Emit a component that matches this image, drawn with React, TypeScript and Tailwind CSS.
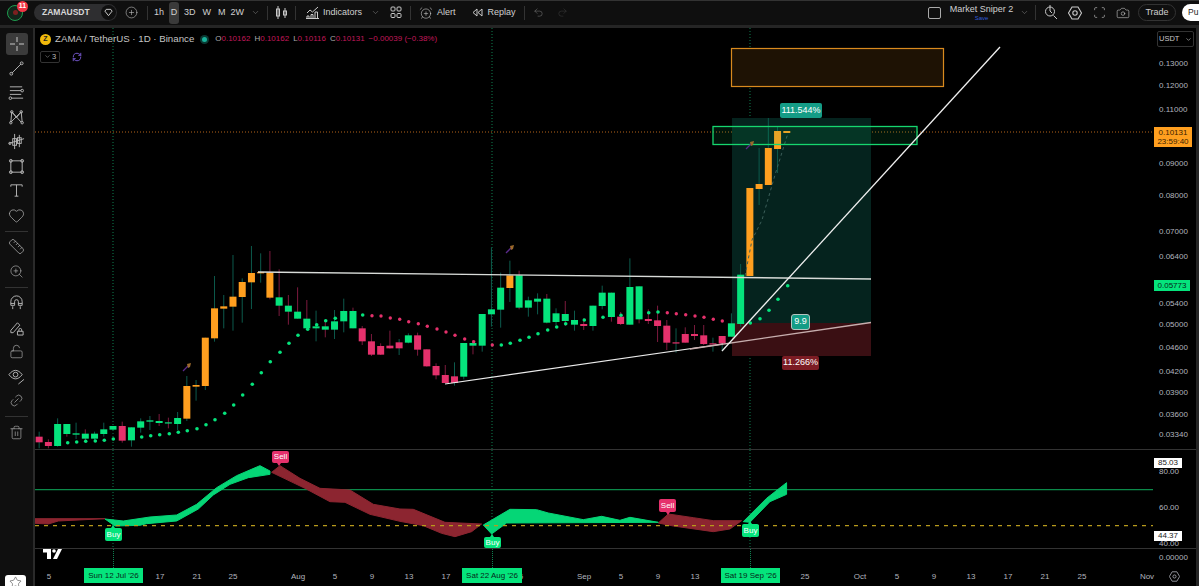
import { ChevronDown, CirclePlus, Undo2, Redo2, Camera, Scan, Heart, Ruler, ZoomIn, LockOpen, Link2, Trash2, AlarmClockPlus, Star, RefreshCw } from "lucide-react";

const GREEN = "#05e47c";
const RED = "#e5316c";
const ORANGE = "#ff9f1f";
const WICK_TEAL = "#0c5a4c";
const WICK_RED = "#7c1a3e";

// kind, bodyTop, bodyBottom, wickTop, wickBottom, in 3x units from y=240
// G = green with red wick, R = red with teal wick, O = orange with red wick
const candles: [string, number, number, number, number][] = [
  ["R", 590, 607, 575, 625], ["r", 606, 618, 598, 625], ["g", 552, 618, 535, 620], ["G", 552, 582, 552, 590],
  ["g", 580, 584, 548, 597], ["G", 581, 596, 568, 604], ["g", 581, 596, 575, 605], ["g", 568, 582, 548, 590],
  ["g", 558, 569, 558, 570], ["r", 558, 602, 545, 608], ["g", 562, 601, 562, 620], ["g", 544, 563, 535, 578],
  ["g", 541, 545, 528, 570], ["G", 543, 549, 522, 558], ["G", 547, 550, 533, 565], ["g", 534, 552, 516, 570],
  ["o", 438, 536, 408, 543], ["o", 435, 440, 420, 482], ["o", 293, 438, 293, 450], ["o", 205, 295, 108, 305],
  ["o", 199, 206, 165, 265], ["o", 170, 200, 45, 272], ["o", 126, 171, 115, 248], ["o", 99, 127, 18, 207],
  ["o", 96, 100, 40, 128], ["O", 97, 173, 33, 178], ["G", 172, 197, 88, 228], ["G", 197, 215, 165, 254],
  ["G", 215, 236, 142, 236], ["G", 236, 265, 180, 270], ["g", 259, 265, 212, 304], ["G", 259, 269, 240, 292],
  ["g", 244, 269, 210, 297], ["g", 213, 244, 176, 277], ["G", 213, 265, 203, 265], ["r", 265, 304, 258, 315],
  ["r", 304, 344, 282, 348], ["r", 318, 344, 310, 345], ["r", 317, 325, 272, 326], ["R", 307, 325, 297, 345],
  ["g", 286, 308, 280, 310], ["r", 286, 329, 278, 347], ["r", 328, 379, 328, 380], ["r", 378, 406, 370, 418],
  ["r", 405, 429, 375, 430], ["R", 409, 429, 367, 437], ["g", 309, 410, 309, 418], ["G", 309, 317, 300, 343],
  ["g", 222, 317, 222, 335], ["g", 208, 223, 22, 260], ["g", 143, 209, 98, 263], ["o", 106, 144, 62, 186],
  ["G", 106, 203, 92, 208], ["g", 181, 203, 170, 230], ["g", 176, 185, 160, 223], ["G", 176, 248, 162, 250],
  ["g", 220, 246, 205, 256], ["G", 222, 243, 183, 258], ["g", 240, 254, 212, 272], ["r", 252, 258, 235, 270],
  ["g", 197, 258, 197, 272], ["g", 158, 198, 137, 208], ["G", 158, 231, 158, 245], ["r", 230, 252, 216, 255],
  ["g", 141, 254, 55, 254], ["G", 139, 238, 139, 250], ["r", 237, 243, 208, 252], ["r", 241, 258, 197, 306],
  ["r", 257, 308, 240, 330], ["R", 307, 309, 265, 338], ["r", 282, 308, 262, 308], ["r", 282, 288, 255, 300],
  ["r", 286, 312, 255, 315], ["R", 310, 312, 293, 335], ["R", 288, 311, 288, 332], ["g", 250, 290, 220, 290],
  ["g", 104, 252, 72, 260], ["o", -156, 108, -156, 108], ["o", -168, -153, -276, -105], ["o", -276, -165, -366, -165],
  ["o", -327, -273, -339, -201], ["o", -327, -321, -327, -321],
];

// parabolic dots, page coordinates
const greenDots: [number, number][] = [
  [67.7, 442.7], [76.7, 442], [85.7, 441.3], [95.3, 441], [104.3, 440.3], [113.3, 439], [141.7, 437], [150.7, 435.7],
  [159.7, 434.7], [169.3, 433.7], [178.3, 432.3], [187.3, 430.7], [197, 428.7], [206, 424.7], [215, 419.7], [224.7, 413.3],
  [233.7, 405], [242.7, 395], [252.3, 384.3], [261.3, 372.7], [270.3, 361.7], [280, 352.3], [289, 343.3], [298, 335.3],
  [307.7, 329.3], [316.7, 324.7], [325.7, 320.7], [335.3, 318.3], [362.7, 315], [501.3, 345], [510.3, 343.3], [520, 340.3],
  [529, 337.3], [538, 333.7], [547.7, 330], [556.7, 327], [565.7, 323.7], [584.3, 320], [603, 317.3], [621, 315.3],
  [648.7, 312.7], [658, 312], [750.3, 323], [760, 318.7], [769, 310.3], [778, 299.3], [787.7, 285.7],
];
const redDots: [number, number][] = [
  [372, 315.7], [381, 316], [390.3, 318], [399.7, 319.3], [408.7, 321.7], [418.3, 323.7], [427.3, 326.3], [437, 329],
  [446, 332], [455, 335.3], [464.7, 339], [473.7, 341.7], [492.3, 345], [667.3, 312.7], [676.3, 313.7], [685.7, 314.7],
  [695, 316], [704, 317.3], [713.3, 319.3], [722.3, 321],
];

const priceTicks = [
  ["0.13000", 64], ["0.12000", 86], ["0.11000", 110], ["0.09000", 164], ["0.08000", 196], ["0.07000", 232], ["0.06400", 257],
  ["0.05400", 304], ["0.05000", 324.5], ["0.04600", 348], ["0.04200", 372], ["0.03900", 393], ["0.03600", 414.5], ["0.03340", 434.5],
] as const;

const timeTicks = [
  ["5", 49], ["17", 160], ["21", 197], ["25", 233], ["Aug", 298], ["5", 335], ["9", 372], ["13", 409], ["17", 446], ["6", 521],
  ["Sep", 584], ["5", 621], ["9", 658], ["13", 695], ["25", 805], ["Oct", 860], ["5", 897], ["9", 934], ["13", 971], ["17", 1008],
  ["21", 1045], ["25", 1082],
] as const;

function Wand({ x, y }: { x: number; y: number }) {
  return (
    <g transform={`translate(${x} ${y})`}>
      <path d="M-4 4 L1 -1" stroke="#5b2a8c" strokeWidth="1.3" />
      <path d="M0 -3 L4 -4 L3 0 L1 1 Z" fill="#9c6a2c" />
    </g>
  );
}

function PriceChart() {
  return (
    <svg viewBox="35 28 1118 421" className="block w-full h-full">
      <line x1="35" y1="132" x2="1153" y2="132" stroke="#b5651a" strokeDasharray="1 2" />
      {[113, 492, 750].map((x) => (
        <line key={x} x1={x} y1="28" x2={x} y2="449" stroke="#0e8050" strokeDasharray="1 2" />
      ))}
      <rect x="732" y="118" width="139" height="205" fill="#05231e" />
      <rect x="732" y="323" width="139" height="33" fill="#3a0f13" />
      <rect x="731.5" y="48.5" width="212" height="38" fill="#1e1204" stroke="#d98a1e" strokeWidth="1.2" />
      {candles.map(([kind, top, bottom, wickTop, wickBottom], i) => {
        const x = 113 + (i - 8) * 9.23;
        const k = kind.toLowerCase();
        const fill = k === "g" ? GREEN : k === "r" ? RED : ORANGE;
        const wick = kind === "G" || kind === "O" || kind === "r" ? WICK_RED : WICK_TEAL;
        return (
          <g key={i}>
            <line x1={x} x2={x} y1={240 + wickTop / 3} y2={240 + wickBottom / 3} stroke={wick} />
            <rect x={x - 3.5} width="7" y={240 + top / 3} height={Math.max((bottom - top) / 3, 1.2)} fill={fill} />
          </g>
        );
      })}
      {greenDots.map(([x, y]) => (
        <circle key={`${x}-${y}`} cx={x} cy={y} r="1.8" fill={GREEN} />
      ))}
      {redDots.map(([x, y]) => (
        <circle key={`${x}-${y}`} cx={x} cy={y} r="1.7" fill={RED} />
      ))}
      <polyline points="745,276 752,240 762,220 775,175 788,133" fill="none" stroke="#3c5f5a" strokeDasharray="3 3" />
      <rect x="713" y="126.5" width="204" height="18" fill="#0bd96f" fillOpacity="0.1" stroke="#16d66f" strokeWidth="1.3" />
      <line x1="258" y1="272" x2="871" y2="279" stroke="#d8dbd8" strokeWidth="1.4" />
      <line x1="445" y1="384" x2="723" y2="344" stroke="#ececec" strokeWidth="1.2" />
      <line x1="690" y1="349" x2="871" y2="322.5" stroke="#c7aeae" strokeWidth="1.3" />
      <line x1="722" y1="351" x2="1000" y2="47" stroke="#f0f0f0" strokeWidth="1.3" />
      <Wand x={187} y={367} />
      <Wand x={510} y={249} />
      <Wand x={750} y={145} />
    </svg>
  );
}

function IndicatorChart() {
  return (
    <svg viewBox="35 450 1118 98" className="block w-full h-full">
      {[113, 492, 750].map((x) => (
        <line key={x} x1={x} y1="450" x2={x} y2="548" stroke="#0e8050" strokeDasharray="1 2" />
      ))}
      <line x1="35" y1="489.6" x2="1153" y2="489.6" stroke="#0b8a4a" strokeWidth="1.2" />
      <g transform="translate(0 445) scale(0.3333)" strokeWidth="3" strokeLinejoin="round">
        <g fill="#8c2530" stroke="#8c2530">
          <polygon points="105,221 315,221 175,228 145,237 105,235" />
          <polygon points="815,82 840,62 900,100 960,130 1050,135 1120,178 1200,192 1240,193 1335,232 1445,237 1415,260 1365,275 1325,265 1270,242 1200,229 1110,208 1035,172 990,170 915,130" />
          <polygon points="1975,234 2005,207 2080,218 2140,227 2225,227 2190,252 2140,260 2020,243" />
        </g>
        <g fill="#05d676" stroke="#05d676">
          <polygon points="315,222 370,228 450,216 530,210 590,178 650,128 710,92 780,62 810,78 810,88 745,98 690,118 640,150 595,192 530,228 440,236 420,241 345,243" />
          <polygon points="1450,240 1530,193 1610,194 1645,204 1750,224 1805,214 1860,226 1890,217 1975,232 1520,234 1475,267" />
          <polygon points="2230,230 2300,160 2360,113 2360,148 2310,170 2250,232" />
        </g>
      </g>
      <line x1="35" y1="525.7" x2="1153" y2="525.7" stroke="#b79a1c" strokeWidth="1.2" strokeDasharray="4 5" />
      <polygon points="277,463 281,463 279,466" fill={RED} />
      <polygon points="666,512 670,512 668,515" fill={RED} />
      <polygon points="111,528 115,528 113,525" fill={GREEN} />
      <polygon points="490,537 494,537 492,534" fill={GREEN} />
      <polygon points="748,524 752,524 750,521" fill={GREEN} />
    </svg>
  );
}

function Tag({ text, className }: { text: string; className: string }) {
  return (
    <div className={`absolute flex items-center justify-center rounded-[2px] text-white ${className}`}>
      {text}
    </div>
  );
}

function SideIcon({ children, className = "" }: { children: React.ReactNode; className?: string }) {
  return <div className={`flex h-[24.5px] w-[33px] items-center justify-center text-[#b8b8b8] ${className}`}>{children}</div>;
}

function SideBar() {
  const s = { size: 15, strokeWidth: 1 };
  const svg = { width: 17, height: 17, viewBox: "0 0 18 18", fill: "none", stroke: "currentColor", strokeWidth: 1 };
  return (
    <div className="relative flex w-[33px] shrink-0 flex-col items-center bg-[#0f0f0f] pt-[5px]">
      <div className="flex h-[22px] w-[22px] items-center justify-center rounded-[3px] bg-[#3b3b3b] text-[#c8c8c8]">
        <svg width="14" height="14" viewBox="0 0 14 14" stroke="currentColor" strokeWidth="1">
          <path d="M7 0v5M7 9v5M0 7h5M9 7h5" />
        </svg>
      </div>
      <div className="mt-[1px]" />
      <SideIcon>
        <svg {...svg}><path d="M4 14 14 4" /><circle cx="3.5" cy="14.5" r="1.5" /><circle cx="14.5" cy="3.5" r="1.5" /></svg>
      </SideIcon>
      <SideIcon>
        <svg {...svg}><path d="M2 3h13M2 7h12M2 11h12M4 15h12" /><circle cx="15" cy="7" r="1.4" /><circle cx="2.5" cy="15" r="1.4" /></svg>
      </SideIcon>
      <SideIcon>
        <svg {...svg}><path d="M4 3 3 14M4 3l5 6 5-6 1 11M4 3l10 11M14 3 3 14" /><circle cx="4" cy="3" r="1.3" /><circle cx="14" cy="3" r="1.3" /><circle cx="3" cy="14.5" r="1.3" /><circle cx="15" cy="14.5" r="1.3" /></svg>
      </SideIcon>
      <SideIcon>
        <svg {...svg}><path d="M7 1v16M12 2v13M1 11l16-5" /><rect x="5" y="6" width="4" height="7" /><rect x="10" y="5" width="4" height="6" /><circle cx="2" cy="11" r="1.2" /></svg>
      </SideIcon>
      <SideIcon>
        <svg {...svg}><rect x="3" y="3" width="12" height="12" /><circle cx="3" cy="3" r="1.5" /><circle cx="15" cy="3" r="1.5" /><circle cx="3" cy="15" r="1.5" /><circle cx="15" cy="15" r="1.5" /></svg>
      </SideIcon>
      <SideIcon>
        <svg {...svg}><path d="M3 5V3h12v2M9 3v12M7 15h4" /></svg>
      </SideIcon>
      <SideIcon><Heart size={17} strokeWidth={1} /></SideIcon>
      <div className="my-[3px] h-px w-[23px] bg-[#333]" />
      <SideIcon><Ruler {...s} size={17} /></SideIcon>
      <SideIcon><ZoomIn {...s} /></SideIcon>
      <div className="my-[3px] h-px w-[23px] bg-[#333]" />
      <SideIcon>
        <svg {...svg}><path d="M3 12V8a6 6 0 0 1 12 0v4h-4V8a2 2 0 0 0-4 0v4zM3 10h4M11 10h4M5 13v3M13 13v3" /></svg>
      </SideIcon>
      <SideIcon>
        <svg {...svg}><path d="M3 12 10 4l2.5 2.5-7 8H3zM10 13h6v4h-6zM11.5 13v-1.5a1.5 1.5 0 0 1 3 0V13" /></svg>
      </SideIcon>
      <SideIcon><LockOpen {...s} /></SideIcon>
      <SideIcon>
        <svg {...svg}><path d="M1 7c2-3 5-4.5 7-4.5S13 4 15 7c-2 3-5 4.5-7 4.5S3 10 1 7Z" /><circle cx="8" cy="7" r="2.5" /><path d="m11 17 6-5" /></svg>
      </SideIcon>
      <SideIcon><Link2 {...s} className="-rotate-45" /></SideIcon>
      <div className="my-[3px] h-px w-[23px] bg-[#333]" />
      <SideIcon><Trash2 {...s} /></SideIcon>
      <div className="absolute bottom-0 left-[5px] flex h-[11px] w-[21px] items-start justify-center overflow-hidden rounded-t-[3px] bg-white pt-[1px]">
        <Star size={13} strokeWidth={1} color="#333" />
      </div>
    </div>
  );
}

function TopBar() {
  const chev = <ChevronDown size={9} strokeWidth={1.2} className="text-[#9a9a9a]" />;
  return (
    <div className="flex h-[28px] shrink-0 items-center border-t border-t-[#333] border-b-[3px] border-b-[#252525] bg-[#0f0f0f] pb-[1px] text-[9px] text-[#d0d0d0]">
      <div className="relative ml-[7px] flex h-4 w-4 items-center justify-center rounded-full border border-[#1f9d4f] bg-[#12261a]">
        <div className="h-[5px] w-[5px] rounded-full bg-[#7c2020]" />
        <div className="absolute left-[9px] top-[-5px] flex h-[11px] w-[11px] items-center justify-center rounded-full bg-[#f23645] text-[7px] font-bold text-white">11</div>
      </div>
      <div className="ml-[11px] flex h-[17px] w-[83px] items-center justify-between rounded-full bg-[#2e2e30] pl-2 pr-[1px] text-[8.5px] font-bold text-[#d8d8d8]">
        ZAMAUSDT
        <div className="flex h-[15px] w-[15px] items-center justify-center rounded-full bg-[#0f0f0f]">
          <svg width="9" height="9" viewBox="0 0 10 10" fill="none" stroke="#ddd"><path d="M1 3.5 2.5 1.5h5L9 3.5 5 8.5z" /></svg>
        </div>
      </div>
      <CirclePlus size={13} strokeWidth={1} className="ml-[8px]" />
      <div className="ml-[9px] h-[14px] w-px bg-[#333]" />
      <span className="ml-[6px]">1h</span>
      <span className="ml-[5px] flex h-[22px] w-[10px] items-center justify-center rounded-[3px] bg-[#3a3a3a]">D</span>
      <span className="ml-[5px]">3D</span>
      <span className="ml-[7px]">W</span>
      <span className="ml-[7px]">M</span>
      <span className="ml-[5px]">2W</span>
      <div className="ml-[7px]">{chev}</div>
      <div className="ml-[7px] h-[14px] w-px bg-[#333]" />
      <svg width="13" height="15" viewBox="0 0 13 15" fill="none" stroke="#c9c9c9" className="ml-[7px]">
        <path d="M3 1v13M10 3v10" /><rect x="1.5" y="4" width="3" height="7" /><rect x="8.5" y="6" width="3" height="4" />
      </svg>
      <div className="ml-[7px] h-[14px] w-px bg-[#333]" />
      <svg width="13" height="13" viewBox="0 0 13 13" fill="none" stroke="#c9c9c9" className="ml-[10px]">
        <path d="M1 7l3-3 2.5 2L12 1" /><path d="M1 12.5V10h2v2.5M5 12.5V8.5h2v4M9 12.5V6h2.5v6.500M0 12.5h13" />
      </svg>
      <span className="ml-[4px]">Indicators</span>
      <div className="ml-[9px]">{chev}</div>
      <svg width="12" height="13" viewBox="0 0 12 13" fill="none" stroke="#c9c9c9" className="ml-[10px]">
        <rect x="1" y="1" width="4" height="4" rx="1" /><rect x="7" y="1" width="4" height="4" rx="1" /><rect x="1" y="7.5" width="4" height="4" rx="1" /><rect x="7" y="7.5" width="4" height="4" rx="1" />
      </svg>
      <div className="ml-[8px] h-[14px] w-px bg-[#333]" />
      <AlarmClockPlus size={14} strokeWidth={1} className="ml-[8px]" />
      <span className="ml-[4px]">Alert</span>
      <svg width="11" height="9" viewBox="0 0 11 9" fill="none" stroke="#c9c9c9" className="ml-[16px]">
        <path d="M5 1 1 4.5 5 8zM10 1 6 4.5 10 8z" />
      </svg>
      <span className="ml-[5px]">Replay</span>
      <div className="ml-[8px] h-[14px] w-px bg-[#333]" />
      <Undo2 size={11} strokeWidth={1} className="ml-[8px] text-[#8a8a8a]" />
      <Redo2 size={11} strokeWidth={1} className="ml-[13px] text-[#444]" />
      <div className="ml-auto flex items-center">
        <div className="h-[12px] w-[13px] rounded-[2px] border border-[#aaa]" />
        <div className="ml-[9px] flex w-[63px] flex-col items-center leading-none">
          <span className="whitespace-nowrap text-[9px]">Market Sniper 2</span>
          <span className="mt-[1px] text-[6px] text-[#2f5bd8]">Save</span>
        </div>
        <div className="ml-[7px]">{chev}</div>
        <div className="ml-[6px] h-[15px] w-px bg-[#333]" />
        <svg width="14" height="15" viewBox="0 0 14 15" fill="none" stroke="#c9c9c9" className="ml-[8px]">
          <circle cx="6" cy="6.5" r="4.5" /><path d="M6 0v6l2 2M9.5 10.5 13 14" />
        </svg>
        <svg width="14" height="14" viewBox="0 0 14 14" fill="none" stroke="#c9c9c9" strokeWidth="1.1" className="ml-[10px]">
          <path d="M4 1h6l3.5 6-3.5 6H4L.5 7z" /><circle cx="7" cy="7" r="2.2" />
        </svg>
        <Scan size={13} strokeWidth={1.1} className="ml-[11px]" />
        <Camera size={14} strokeWidth={1} className="ml-[10px]" />
        <div className="ml-[8px] flex h-[17px] w-[38px] items-center justify-center rounded-full border border-[#333]">Trade</div>
        <div className="ml-[6px] flex h-[17px] w-[17px] items-center overflow-hidden rounded-l-full bg-white pl-[6px] text-[8.5px] text-[#222]">Pu</div>
      </div>
    </div>
  );
}

function Legend() {
  return (
    <div className="absolute left-[5px] top-[4px]">
      <div className="flex items-center">
        <div className="flex h-[11px] w-[11px] items-center justify-center rounded-full bg-[#f0b90b] text-[7px] font-bold text-[#222]">Z</div>
        <span className="ml-[4px] text-[9.7px] text-[#c4c4c4]">ZAMA / TetherUS · 1D · Binance</span>
        <div className="ml-[6px] flex h-[9px] w-[9px] items-center justify-center rounded-full bg-[#0b3a34]">
          <div className="h-[5px] w-[5px] rounded-full bg-[#19b29b]" />
        </div>
        <div className="ml-[6px] flex gap-[4px] text-[8px] text-[#c2185b]">
          <span><span className="text-[#aaa]">O</span>0.10162</span>
          <span><span className="text-[#aaa]">H</span>0.10162</span>
          <span><span className="text-[#aaa]">L</span>0.10116</span>
          <span><span className="text-[#aaa]">C</span>0.10131</span>
          <span>−0.00039 (−0.38%)</span>
        </div>
      </div>
      <div className="mt-[4px] flex items-center">
        <div className="flex h-[12px] w-[20px] items-center justify-center gap-[1px] rounded-[2px] border border-[#333] text-[7.5px] text-[#bbb]">
          <ChevronDown size={7} strokeWidth={1.5} />3
        </div>
        <RefreshCw size={10} strokeWidth={2.2} color="#7b5cd6" className="ml-[12px]" />
      </div>
    </div>
  );
}

export default function App() {
  return (
    <div className="flex h-[586px] w-[1199px] flex-col overflow-hidden bg-black font-['Liberation_Sans',Arial,sans-serif]">
      <TopBar />
      <div className="flex min-h-0 flex-1">
        <SideBar />
        <div className="w-[2px] shrink-0 bg-[#2a2a2a]" />
        <div className="flex min-w-0 flex-1 flex-col border-r-[3px] border-r-[#252525]">
          {/* price pane */}
          <div className="flex h-[422px] shrink-0 border-b border-b-[#333]">
            <div className="relative min-w-0 flex-1">
              <PriceChart />
              <Legend />
              <Tag text="111.544%" className="left-[745px] top-[75px] h-[15px] w-[42px] bg-[#149c86] text-[9px]" />
              <Tag text="11.266%" className="left-[747px] top-[328px] h-[14px] w-[37px] bg-[#7c1c24] text-[9px]" />
              <div className="absolute left-[756px] top-[286px] flex h-4 w-[19px] items-center justify-center rounded-[3px] border border-[#b5c4c0] bg-[#149c86] text-[9px] text-white">9.9</div>
            </div>
            <div className="relative w-[43px] shrink-0 text-[8px] text-[#b2b5be]">
              <div className="absolute left-[4px] top-[3px] flex h-4 w-[37px] items-center justify-between rounded-[2px] border border-[#333] px-[1px] text-[7.5px] text-[#c8c8c8]">
                USDT
                <ChevronDown size={7} strokeWidth={2} />
              </div>
              {priceTicks.map(([label, y]) => (
                <span key={label} className="absolute left-[6px] -translate-y-1/2" style={{ top: y - 28 }}>{label}</span>
              ))}
              <div className="absolute left-[1px] top-[99px] flex h-5 w-[38px] flex-col items-center justify-center bg-[#ff9f1f] leading-[9px] text-[#3a2200]">
                <span>0.10131</span>
                <span>23:59:40</span>
              </div>
              <div className="absolute left-[1px] top-[252px] flex h-[11px] w-[36px] items-center justify-center bg-[#05e47c] text-[#06281a]">0.05773</div>
            </div>
          </div>
          {/* indicator pane */}
          <div className="flex h-[99px] shrink-0 border-b border-b-[#333]">
            <div className="relative min-w-0 flex-1">
              <IndicatorChart />
              <Tag text="Sell" className="left-[237px] top-[1px] h-3 w-[17px] bg-[#e5316c] text-[8px]" />
              <Tag text="Buy" className="left-[70px] top-[78px] h-[13px] w-[17px] bg-[#05e47c] text-[8px]" />
              <Tag text="Buy" className="left-[449px] top-[87px] h-[11px] w-[17px] bg-[#05e47c] text-[8px]" />
              <Tag text="Sell" className="left-[624px] top-[49px] h-[13px] w-[17px] bg-[#e5316c] text-[8px]" />
              <Tag text="Buy" className="left-[707px] top-[74px] h-[13px] w-[17px] bg-[#05e47c] text-[8px]" />
            </div>
            <div className="relative w-[43px] shrink-0 text-[8px] text-[#b2b5be]">
              <span className="absolute left-[6px] top-[16px]">80.00</span>
              <span className="absolute left-[6px] top-[52px]">60.00</span>
              <span className="absolute left-[6px] top-[88px]">40.00</span>
              <div className="absolute left-[1px] top-[8px] flex h-[10px] w-[28px] items-center justify-center bg-white text-[#222]">85.03</div>
              <div className="absolute left-[1px] top-[81px] flex h-[10px] w-[28px] items-center justify-center bg-white text-[#222]">44.37</div>
            </div>
          </div>
          {/* time axis */}
          <div className="relative min-h-0 flex-1 text-[8px] text-[#b2b5be]">
            <svg width="20" height="11" viewBox="0 0 20 11" fill="#ffffff" className="absolute left-[8px] top-0">
              <rect x="0" y="0" width="8" height="3.5" />
              <rect x="4" y="0" width="4" height="10" />
              <circle cx="11" cy="2" r="1.8" />
              <polygon points="15,0 19,0 14,10 10,10" />
            </svg>
            {[113, 492, 750].map((x) => (
              <div key={x} className="absolute top-0 h-[19px] border-l border-dotted border-l-[#0e8050]" style={{ left: x - 35 }} />
            ))}
            {timeTicks.map(([label, x]) => (
              <span key={`${label}-${x}`} className="absolute top-[22px] -translate-x-1/2" style={{ left: x - 35 }}>{label}</span>
            ))}
            <div className="absolute left-[49px] top-[19px] flex h-[15px] w-[59px] items-center justify-center bg-[#05e47c] text-[#06281a]">Sun 12 Jul '26</div>
            <div className="absolute left-[427px] top-[19px] flex h-[15px] w-[60px] items-center justify-center bg-[#05e47c] text-[#06281a]">Sat 22 Aug '26</div>
            <div className="absolute left-[686px] top-[19px] flex h-[15px] w-[59px] items-center justify-center bg-[#05e47c] text-[#06281a]">Sat 19 Sep '26</div>
            <span className="absolute left-[1124px] top-[3px]">0.00000</span>
            <span className="absolute left-[1112px] top-[22px] -translate-x-1/2">Nov</span>
            <svg width="11" height="11" viewBox="0 0 14 14" fill="none" stroke="#b2b5be" className="absolute left-[1134px] top-[22px]">
              <path d="M4 1h6l3.5 6-3.5 6H4L.5 7z" /><circle cx="7" cy="7" r="2" />
            </svg>
          </div>
        </div>
      </div>
    </div>
  );
}
